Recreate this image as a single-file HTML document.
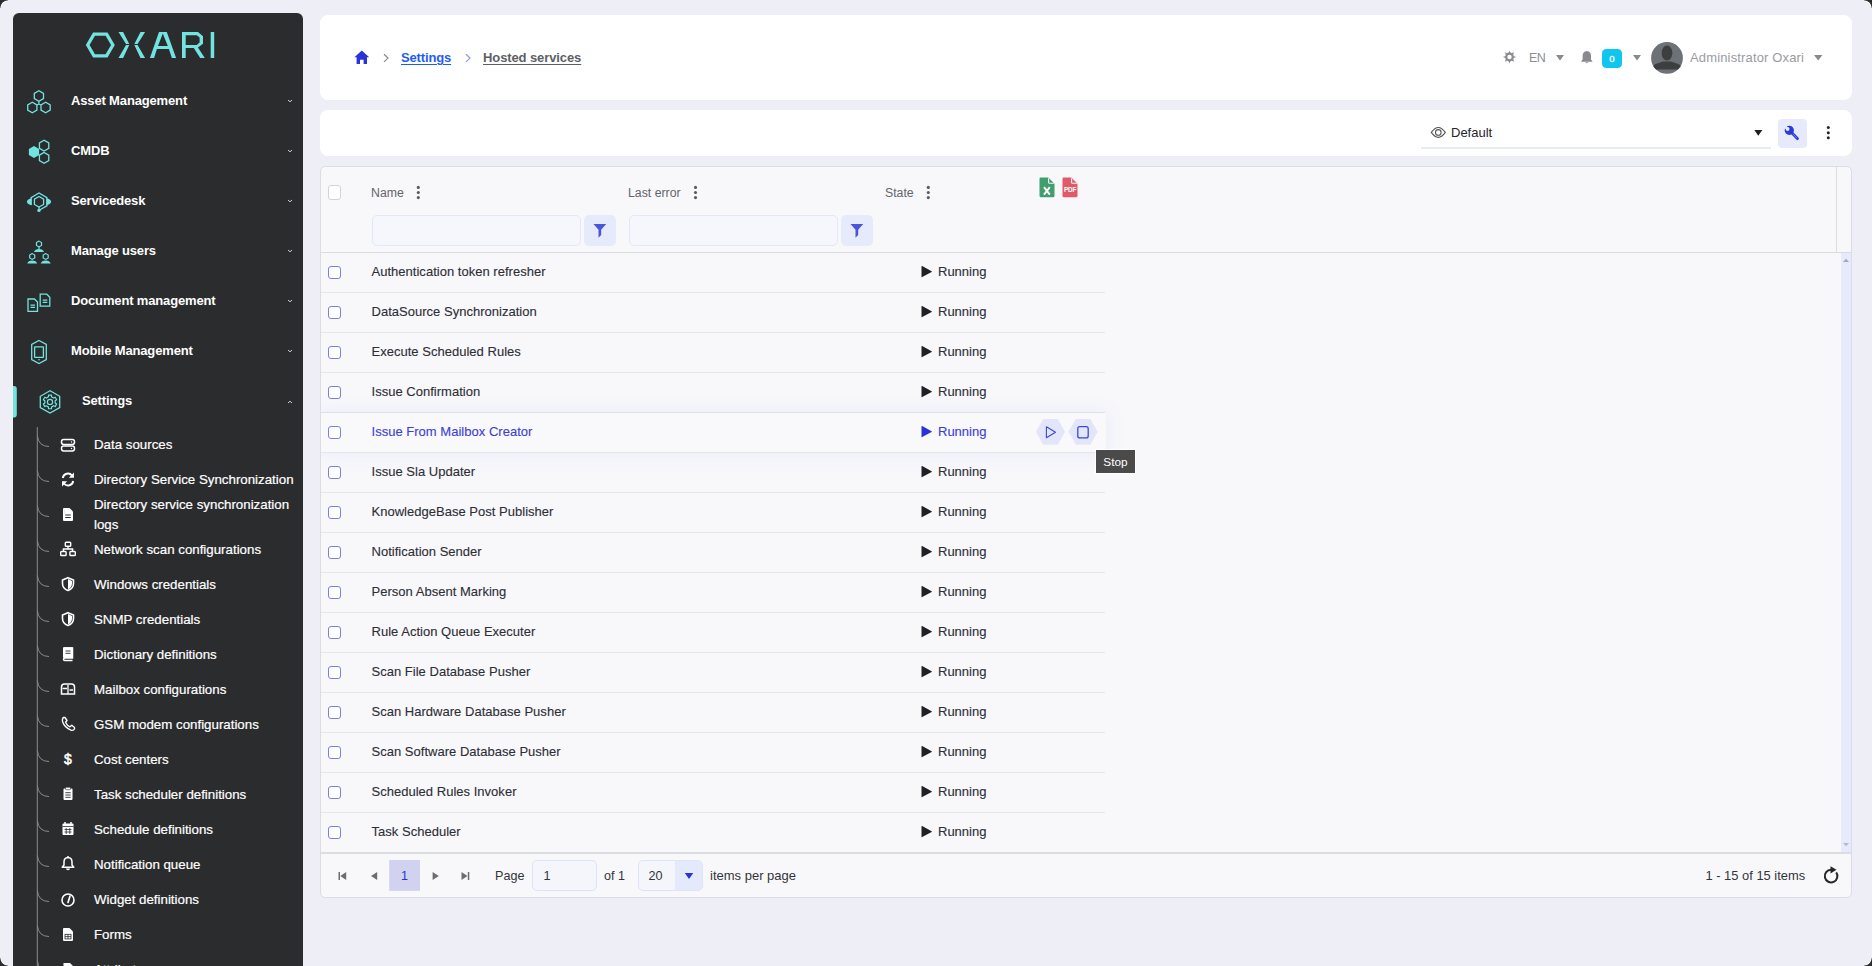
<!DOCTYPE html>
<html><head><meta charset="utf-8">
<style>
*{box-sizing:border-box;margin:0;padding:0}
html,body{width:1872px;height:966px;overflow:hidden;background:#eeeef6;font-family:"Liberation Sans",sans-serif;position:relative}
.a{position:absolute}
#sb{position:absolute;left:13px;top:13px;width:290px;height:990px;background:#2b2c2e;border-radius:6px}
.mi{position:absolute;left:71px;color:#fff;font-weight:bold;font-size:13px;letter-spacing:-0.15px;line-height:20px;white-space:nowrap}
.si{position:absolute;left:94px;color:#fff;font-size:13.3px;-webkit-text-stroke:0.2px #fff;line-height:20px;white-space:nowrap}
.card{position:absolute;background:#fff;border-radius:8px}
.tx{position:absolute;white-space:nowrap;line-height:20px}
.rl{position:absolute;left:321px;width:784px;height:1px;background:#e4e5ea}
.cb{position:absolute;left:328px;width:13px;height:13px;border:1.2px solid #7a7fe6;border-radius:3px;background:#fff}
.nm{position:absolute;left:371.5px;font-size:13px;letter-spacing:0.02px;-webkit-text-stroke:0.12px currentColor;color:#2b2b33;line-height:20px;white-space:nowrap}
.st{position:absolute;left:938px;font-size:13px;-webkit-text-stroke:0.12px currentColor;color:#2b2b33;line-height:20px;white-space:nowrap}
.play{position:absolute;left:921px;width:0;height:0;border-left:10px solid #1e1f24;border-top:6px solid transparent;border-bottom:6px solid transparent}
.corner{position:absolute;width:8px;height:8px}
</style></head><body>
<div class="corner" style="left:0;top:0;background:radial-gradient(circle at 100% 100%,transparent 6.6px,#fff 7.1px,#2b2c2e 8px)"></div>
<div class="corner" style="right:0;top:0;background:radial-gradient(circle at 0 100%,transparent 6.6px,#fff 7.1px,#2b2c2e 8px)"></div>
<div class="corner" style="left:0;bottom:0;background:radial-gradient(circle at 100% 0,transparent 6.6px,#fff 7.1px,#2b2c2e 8px)"></div>
<div class="corner" style="right:0;bottom:0;background:radial-gradient(circle at 0 0,transparent 6.6px,#fff 7.1px,#2b2c2e 8px)"></div>
<div id="sb"></div>
<svg class="a" style="left:0;top:0" width="320" height="966" viewBox="0 0 320 966"><polygon points="112.90,45.00 106.60,34.09 94.00,34.09 87.70,45.00 94.00,55.91 106.60,55.91" fill="none" stroke="#72e3df" stroke-width="3.3"/>
<polygon points="118.5,32 123.1,32 129.5,44.5 123.1,58 118.5,58 126.3,44.5" fill="#72e3df"/>
<polygon points="145.1,32 140.5,32 134.1,44.5 140.5,58 145.1,58 137.3,44.5" fill="#72e3df"/>
<rect x="124" y="44" width="16" height="1" fill="#2b2c2e"/>
<path d="M149.9,58 L159,32 L166.8,32 L176.1,58 L171.9,58 L168.9,49.1 L156.9,49.1 L154.1,58 Z M158,46 L162.8,33.6 L167.8,46 Z" fill="#72e3df" fill-rule="evenodd"/>
<path d="M182,32 L198,32 L203,36.3 L203,43.8 L198,47.5 L204.8,58 L200.2,58 L193.8,48.1 L185.7,48.1 L185.7,58 L182,58 Z M185.7,35.2 L196.8,35.2 L199.6,37.6 L199.6,42.6 L196.8,44.9 L185.7,44.9 Z" fill="#72e3df" fill-rule="evenodd"/>
<rect x="210.7" y="32" width="3.5" height="26" fill="#72e3df"/>
<polygon points="38.90,90.70 34.31,93.35 34.31,98.65 38.90,101.30 43.49,98.65 43.49,93.35" fill="none" stroke="#72e3df" stroke-width="1.3"/>
<polygon points="32.30,102.20 27.71,104.85 27.71,110.15 32.30,112.80 36.89,110.15 36.89,104.85" fill="none" stroke="#72e3df" stroke-width="1.3"/>
<polygon points="45.60,102.20 41.01,104.85 41.01,110.15 45.60,112.80 50.19,110.15 50.19,104.85" fill="none" stroke="#72e3df" stroke-width="1.3"/>
<path d="M38.9,101.3 L38.9,104 M36.9,105 L38.9,104 L40.9,105" fill="none" stroke="#72e3df" stroke-width="1.3"/>
<polygon points="34.00,146.10 28.89,149.05 28.89,154.95 34.00,157.90 39.11,154.95 39.11,149.05" fill="#72e3df"/>
<polygon points="44.10,140.20 39.42,142.90 39.42,148.30 44.10,151.00 48.78,148.30 48.78,142.90" fill="none" stroke="#72e3df" stroke-width="1.3"/>
<polygon points="44.10,152.40 39.42,155.10 39.42,160.50 44.10,163.20 48.78,160.50 48.78,155.10" fill="none" stroke="#72e3df" stroke-width="1.3"/>
<path d="M31.1,199 L31.1,197.6 L39,192.9 L46.9,197.6 L46.9,199 M46.9,204.5 L46.9,205.8 L40,209.8" fill="none" stroke="#72e3df" stroke-width="1.3"/>
<polygon points="39.00,196.50 34.41,199.15 34.41,204.45 39.00,207.10 43.59,204.45 43.59,199.15" fill="none" stroke="#72e3df" stroke-width="1.3"/>
<path d="M31.9,198.3 L31.9,205.2 Q27.2,204.8 26.9,201.8 Q27.2,198.8 31.9,198.3 Z" fill="#72e3df"/><path d="M46.1,198.3 L46.1,205.2 Q50.8,204.8 51.1,201.8 Q50.8,198.8 46.1,198.3 Z" fill="#72e3df"/>
<circle cx="39" cy="210.4" r="1.7" fill="#72e3df"/><path d="M39,206.8 L39,209" stroke="#72e3df" stroke-width="1.2"/>
<polygon points="39.00,241.10 36.49,242.55 36.49,245.45 39.00,246.90 41.51,245.45 41.51,242.55" fill="none" stroke="#72e3df" stroke-width="1.2"/>
<path d="M34,252 Q35,249 39,249 Q43,249 44,252 Z" fill="#72e3df"/>
<polygon points="32.20,253.60 29.69,255.05 29.69,257.95 32.20,259.40 34.71,257.95 34.71,255.05" fill="none" stroke="#72e3df" stroke-width="1.2"/>
<path d="M27.200000000000003,263.5 Q28.200000000000003,260.5 32.2,260.5 Q36.2,260.5 37.2,263.5 Z" fill="#72e3df"/>
<polygon points="45.70,253.60 43.19,255.05 43.19,257.95 45.70,259.40 48.21,257.95 48.21,255.05" fill="none" stroke="#72e3df" stroke-width="1.2"/>
<path d="M40.7,263.5 Q41.7,260.5 45.7,260.5 Q49.7,260.5 50.7,263.5 Z" fill="#72e3df"/>
<path d="M39,247 L39,249" stroke="#72e3df" stroke-width="1.2"/>
<path d="M28,299 L34.5,299 L37.5,302 L37.5,311.3 L28,311.3 Z" fill="none" stroke="#72e3df" stroke-width="1.3"/><path d="M30.5,305.15 L35.0,305.15 M30.5,307.364 L35.0,307.364" stroke="#72e3df" stroke-width="1.2"/>
<path d="M40.2,294.2 L46.800000000000004,294.2 L49.800000000000004,297.2 L49.800000000000004,306.2 L40.2,306.2 Z" fill="none" stroke="#72e3df" stroke-width="1.3"/><path d="M42.7,300.2 L47.300000000000004,300.2 M42.7,302.36 L47.300000000000004,302.36" stroke="#72e3df" stroke-width="1.2"/>
<polygon points="39,340.5 46.3,344.5 46.3,359.5 39,363.5 31.7,359.5 31.7,344.5" fill="none" stroke="#72e3df" stroke-width="1.3"/>
<rect x="34.6" y="346.8" width="8.8" height="10.6" rx="0.5" fill="none" stroke="#72e3df" stroke-width="1.3"/>
<circle cx="39" cy="359.8" r="0.8" fill="#72e3df"/>
<polygon points="50.00,390.70 40.30,396.30 40.30,407.50 50.00,413.10 59.70,407.50 59.70,396.30" fill="none" stroke="#72e3df" stroke-width="1.3"/>
<polygon points="51.55,396.83 51.46,395.05 48.54,395.05 48.45,396.83 47.80,397.19 47.40,397.40 47.02,397.64 46.39,398.02 44.80,397.22 43.34,399.74 44.84,400.71 44.82,401.45 44.80,401.90 44.82,402.35 44.84,403.09 43.34,404.06 44.80,406.58 46.39,405.78 47.02,406.16 47.40,406.40 47.80,406.61 48.45,406.97 48.54,408.75 51.46,408.75 51.55,406.97 52.20,406.61 52.60,406.40 52.98,406.16 53.61,405.78 55.20,406.58 56.66,404.06 55.16,403.09 55.18,402.35 55.20,401.90 55.18,401.45 55.16,400.71 56.66,399.74 55.20,397.22 53.61,398.02 52.98,397.64 52.60,397.40 52.20,397.19" fill="none" stroke="#72e3df" stroke-width="1.2" stroke-linejoin="round"/>
<circle cx="50" cy="401.9" r="2.6" fill="none" stroke="#72e3df" stroke-width="1.2"/>
<path d="M13,386 L14,386 Q16.8,386 16.8,389 L16.8,414.5 Q16.8,417.5 14,417.5 L13,417.5 Z" fill="#72e3df"/>
<path d="M288,100 L290,101.8 L292,100" fill="none" stroke="#cfd0d2" stroke-width="1"/>
<path d="M288,150 L290,151.8 L292,150" fill="none" stroke="#cfd0d2" stroke-width="1"/>
<path d="M288,200 L290,201.8 L292,200" fill="none" stroke="#cfd0d2" stroke-width="1"/>
<path d="M288,250 L290,251.8 L292,250" fill="none" stroke="#cfd0d2" stroke-width="1"/>
<path d="M288,300 L290,301.8 L292,300" fill="none" stroke="#cfd0d2" stroke-width="1"/>
<path d="M288,350 L290,351.8 L292,350" fill="none" stroke="#cfd0d2" stroke-width="1"/>
<path d="M288,403 L290,401.2 L292,403" fill="none" stroke="#cfd0d2" stroke-width="1"/>
<path d="M37.3,427 L37.3,980" stroke="#8a8b8e" stroke-width="1"/>
<path d="M37.3,435.5 Q38.5,446.5 49,446.5" fill="none" stroke="#8a8b8e" stroke-width="1"/>
<path d="M37.3,470.5 Q38.5,481.5 49,481.5" fill="none" stroke="#8a8b8e" stroke-width="1"/>
<path d="M37.3,505.5 Q38.5,516.5 49,516.5" fill="none" stroke="#8a8b8e" stroke-width="1"/>
<path d="M37.3,540.5 Q38.5,551.5 49,551.5" fill="none" stroke="#8a8b8e" stroke-width="1"/>
<path d="M37.3,575.5 Q38.5,586.5 49,586.5" fill="none" stroke="#8a8b8e" stroke-width="1"/>
<path d="M37.3,610.5 Q38.5,621.5 49,621.5" fill="none" stroke="#8a8b8e" stroke-width="1"/>
<path d="M37.3,645.5 Q38.5,656.5 49,656.5" fill="none" stroke="#8a8b8e" stroke-width="1"/>
<path d="M37.3,680.5 Q38.5,691.5 49,691.5" fill="none" stroke="#8a8b8e" stroke-width="1"/>
<path d="M37.3,715.5 Q38.5,726.5 49,726.5" fill="none" stroke="#8a8b8e" stroke-width="1"/>
<path d="M37.3,750.5 Q38.5,761.5 49,761.5" fill="none" stroke="#8a8b8e" stroke-width="1"/>
<path d="M37.3,785.5 Q38.5,796.5 49,796.5" fill="none" stroke="#8a8b8e" stroke-width="1"/>
<path d="M37.3,820.5 Q38.5,831.5 49,831.5" fill="none" stroke="#8a8b8e" stroke-width="1"/>
<path d="M37.3,855.5 Q38.5,866.5 49,866.5" fill="none" stroke="#8a8b8e" stroke-width="1"/>
<path d="M37.3,890.5 Q38.5,901.5 49,901.5" fill="none" stroke="#8a8b8e" stroke-width="1"/>
<path d="M37.3,925.5 Q38.5,936.5 49,936.5" fill="none" stroke="#8a8b8e" stroke-width="1"/>
<path d="M37.3,960.5 Q38.5,971.5 49,971.5" fill="none" stroke="#8a8b8e" stroke-width="1"/>
<rect x="61.5" y="439.5" width="13" height="5" rx="2.2" fill="none" stroke="#ffffff" stroke-width="1.5"/><rect x="61.5" y="446" width="13" height="5" rx="2.2" fill="none" stroke="#ffffff" stroke-width="1.5"/><circle cx="71.5" cy="442" r="0.7" fill="#ffffff"/><circle cx="71.5" cy="448.5" r="0.7" fill="#ffffff"/>
<path d="M62.8,478 A5.2,5.2 0 0 1 72,475.5 M73.2,481 A5.2,5.2 0 0 1 64,483.5" fill="none" stroke="#ffffff" stroke-width="1.9"/><polygon points="74,472.5 74,477.8 68.8,477.8" fill="#ffffff"/><polygon points="62,486.5 62,481.2 67.2,481.2" fill="#ffffff"/>
<path d="M64,508 L69.5,508 L73,511.5 L73,520 Q73,521 72,521 L64,521 Q63,521 63,520 L63,509 Q63,508 64,508 Z" fill="#ffffff"/><path d="M65.2,515 L70.8,515 M65.2,517.5 L70.8,517.5" stroke="#2b2c2e" stroke-width="1"/><path d="M64.5,509.5 L64.5,514" stroke="#2b2c2e" stroke-width="0.1"/>
<rect x="65.3" y="542.2" width="5.4" height="4" rx="0.8" fill="none" stroke="#ffffff" stroke-width="1.4"/><rect x="60.7" y="551.5" width="5.4" height="4" rx="0.8" fill="none" stroke="#ffffff" stroke-width="1.4"/><rect x="69.9" y="551.5" width="5.4" height="4" rx="0.8" fill="none" stroke="#ffffff" stroke-width="1.4"/><path d="M68,546.5 L68,549 M63.4,551 L63.4,549 L72.6,549 L72.6,551" fill="none" stroke="#ffffff" stroke-width="1.4"/>
<path d="M68,577.7 L73.5,580 L73.5,583.5 Q73.5,588.5 68,590.5 Q62.5,588.5 62.5,583.5 L62.5,580 Z" fill="none" stroke="#ffffff" stroke-width="1.6"/><path d="M68,579 L68,589.5 Q71.8,587.5 72,583.5 L72,581 Z" fill="#ffffff"/>
<path d="M68,612.7 L73.5,615 L73.5,618.5 Q73.5,623.5 68,625.5 Q62.5,623.5 62.5,618.5 L62.5,615 Z" fill="none" stroke="#ffffff" stroke-width="1.6"/><path d="M68,614 L68,624.5 Q71.8,622.5 72,618.5 L72,616 Z" fill="#ffffff"/>
<path d="M63.5,648 L72.5,648 L72.5,658 L64.8,658 Q63.5,658 63.5,659.3 Q63.5,660.5 64.8,660.5 L72.5,660.5" fill="none" stroke="#ffffff" stroke-width="1.5"/><rect x="63" y="647.3" width="10" height="10.8" rx="1" fill="#ffffff"/><path d="M65.5,651 L70.5,651 M65.5,653.3 L70.5,653.3" stroke="#2b2c2e" stroke-width="0.9"/>
<path d="M64.5,684 L71.5,684 Q74.5,684 74.5,687 L74.5,694 L61.5,694 L61.5,687 Q61.5,684 64.5,684 Z" fill="none" stroke="#ffffff" stroke-width="1.5"/><path d="M68,685 L68,694 M62.5,688.5 L67,688.5 M69.5,690 L73,690" stroke="#ffffff" stroke-width="1.3"/>
<path d="M63.3,717.5 Q62,719 62.5,721.5 Q64.5,727.5 71,730.2 Q73.5,730.8 74.5,729 L74.5,727.5 L71.8,725.3 L70,726.8 Q67,725.5 65.5,722.2 L67,720.5 L65,717.5 Z" fill="none" stroke="#ffffff" stroke-width="1.4" stroke-linejoin="round"/>
<text x="68" y="764.3" text-anchor="middle" font-family="Liberation Sans" font-size="14" fill="#ffffff" stroke="#ffffff" stroke-width="0.5">$</text>
<rect x="63.5" y="788.5" width="9" height="11.5" rx="1" fill="#ffffff"/><rect x="65.5" y="787.2" width="5" height="2.5" rx="0.8" fill="#ffffff" stroke="#2b2c2e" stroke-width="0.6"/><path d="M65.3,792.7 L70.7,792.7 M65.3,795 L70.7,795 M65.3,797.3 L70.7,797.3" stroke="#2b2c2e" stroke-width="0.9"/>
<rect x="62.5" y="823.5" width="11" height="11.5" rx="1" fill="#ffffff"/><path d="M65,822 L65,824.5 M71,822 L71,824.5" stroke="#ffffff" stroke-width="1.5"/><path d="M62.5,826.5 L73.5,826.5" stroke="#2b2c2e" stroke-width="0.8"/><path d="M64.5,829.5 L71.5,829.5 M64.5,832 L71.5,832 M66.2,828 L66.2,834 M69.8,828 L69.8,834" stroke="#2b2c2e" stroke-width="0.8"/>
<path d="M68,857.5 Q72,857.8 72,862 L72,865 L73.8,867.2 L62.2,867.2 L64,865 L64,862 Q64,857.8 68,857.5 Z" fill="none" stroke="#ffffff" stroke-width="1.5" stroke-linejoin="round"/><path d="M66.5,869 Q68,870.8 69.5,869 Z" fill="#ffffff" stroke="#ffffff" stroke-width="1"/><path d="M68,856 L68,857.5" stroke="#ffffff" stroke-width="1.4"/>
<circle cx="68" cy="900" r="6" fill="none" stroke="#ffffff" stroke-width="1.6"/><path d="M68,902.5 L70,896" stroke="#ffffff" stroke-width="1.7" stroke-linecap="round"/>
<path d="M64,928 L69.5,928 L73,931.5 L73,940 Q73,941 72,941 L64,941 Q63,941 63,940 L63,929 Q63,928 64,928 Z" fill="#ffffff"/><rect x="65" y="934.3" width="6" height="4.6" fill="none" stroke="#2b2c2e" stroke-width="0.8"/><path d="M65,936.6 L71,936.6 M68,934.3 L68,938.9" stroke="#2b2c2e" stroke-width="0.8"/>
<path d="M63.5,963 L70,963 L73,966 L73,975 L63.5,975 Z" fill="#ffffff"/></svg>
<div class="mi" style="top:91px">Asset Management</div>
<div class="mi" style="top:141px">CMDB</div>
<div class="mi" style="top:191px">Servicedesk</div>
<div class="mi" style="top:241px">Manage users</div>
<div class="mi" style="top:291px">Document management</div>
<div class="mi" style="top:341px">Mobile Management</div>
<div class="mi" style="top:391px;left:82px">Settings</div>
<div class="si" style="top:435px">Data sources</div>
<div class="si" style="top:470px">Directory Service Synchronization</div>
<div class="si" style="top:495px">Directory service synchronization<br>logs</div>
<div class="si" style="top:540px">Network scan configurations</div>
<div class="si" style="top:575px">Windows credentials</div>
<div class="si" style="top:610px">SNMP credentials</div>
<div class="si" style="top:645px">Dictionary definitions</div>
<div class="si" style="top:680px">Mailbox configurations</div>
<div class="si" style="top:715px">GSM modem configurations</div>
<div class="si" style="top:750px">Cost centers</div>
<div class="si" style="top:785px">Task scheduler definitions</div>
<div class="si" style="top:820px">Schedule definitions</div>
<div class="si" style="top:855px">Notification queue</div>
<div class="si" style="top:890px">Widget definitions</div>
<div class="si" style="top:925px">Forms</div>
<div class="si" style="top:960px">Attributes</div>
<!-- header card -->
<div class="card" style="left:320px;top:15px;width:1532px;height:85px"></div>
<div class="card" style="left:320px;top:110px;width:1532px;height:46px"></div>
<svg class="a" style="left:0;top:0" width="1872" height="160" viewBox="0 0 1872 160">
<!-- home -->
<path d="M361.8,50.5 L369.2,57.3 L367,57.3 L367,64 L363.6,64 L363.6,59.8 L360,59.8 L360,64 L356.6,64 L356.6,57.3 L354.4,57.3 Z" fill="#2a33d6"/>
<path d="M384,54.3 L388,58.1 L384,61.9" fill="none" stroke="#8a8a8e" stroke-width="1.2"/>
<path d="M466,54.3 L470,58.1 L466,61.9" fill="none" stroke="#9393e3" stroke-width="1.2"/>
<!-- gear -->
<g transform="translate(1509.5,57)" fill="#8a8a8e"><polygon points="-1.09,-4.06 0.00,-6.60 1.09,-4.06"/><polygon points="2.10,-3.64 4.67,-4.67 3.64,-2.10"/><polygon points="4.06,-1.09 6.60,-0.00 4.06,1.09"/><polygon points="3.64,2.10 4.67,4.67 2.10,3.64"/><polygon points="1.09,4.06 0.00,6.60 -1.09,4.06"/><polygon points="-2.10,3.64 -4.67,4.67 -3.64,2.10"/><polygon points="-4.06,1.09 -6.60,0.00 -4.06,-1.09"/><polygon points="-3.64,-2.10 -4.67,-4.67 -2.10,-3.64"/><circle r="3.3" fill="none" stroke="#8a8a8e" stroke-width="2.2"/></g>
<polygon points="1556,55 1564,55 1560,60.6" fill="#8a8a8e"/>
<!-- bell -->
<path d="M1586.8,51 Q1591,51.5 1591,56 L1591,59.5 L1592.6,61.8 L1581,61.8 L1582.6,59.5 L1582.6,56 Q1582.6,51.5 1586.8,51 Z" fill="#8a8a8e"/>
<path d="M1585.2,62.3 Q1586.8,64.2 1588.4,62.3 Z" fill="#8a8a8e"/>
<rect x="1602" y="49" width="20" height="19" rx="4.3" fill="#0fc6ef"/>
<text x="1611.9" y="61.7" text-anchor="middle" font-family="Liberation Sans" font-size="9.6" fill="#fff" stroke="#fff" stroke-width="0.35">0</text>
<polygon points="1633,55 1641,55 1637,60.6" fill="#8a8a8e"/>
<!-- avatar -->
<defs><clipPath id="av"><circle cx="1667" cy="57.9" r="15.9"/></clipPath></defs>
<circle cx="1667" cy="57.9" r="15.9" fill="#6d7178"/>
<g clip-path="url(#av)">
<ellipse cx="1667" cy="53" rx="5.4" ry="7.4" fill="#3d3e40"/>
<path d="M1652,69.5 L1653,66.5 Q1654,64 1658,63.2 L1663,61.5 L1671,61.5 L1676,63.2 Q1680,64 1681,66.5 L1682,69.5 Z" fill="#3d3e40"/>
</g>
<polygon points="1814,55 1822.4,55 1818.2,60.6" fill="#8a8a8e"/>
<!-- toolbar -->
<g fill="none" stroke="#55565c" stroke-width="1.1">
<path d="M1431.3,132.4 Q1438.3,122.5 1445.3,132.4 Q1438.3,142.3 1431.3,132.4 Z"/>
<circle cx="1438.3" cy="132.4" r="2.8"/>
</g>
<polygon points="1754.3,130 1762.3,130 1758.3,135.8" fill="#1f2024"/>
<rect x="1421" y="147.5" width="350" height="1" fill="#d6d7df"/>
<rect x="1778" y="119" width="29" height="29" rx="4" fill="#e7eafc"/>
<line x1="1791.5" y1="132.5" x2="1797.4" y2="138.6" stroke="#2c3ad8" stroke-width="2.9" stroke-linecap="round"/><line x1="1792.6" y1="133.6" x2="1797" y2="138.2" stroke="#9aa2ee" stroke-width="0.6"/><circle cx="1789.3" cy="130.3" r="4.6" fill="#2c3ad8"/><circle cx="1787.6" cy="129" r="1.9" fill="#e7eafc"/><line x1="1787.6" y1="129" x2="1784.6" y2="126" stroke="#e7eafc" stroke-width="2.6"/>
<circle cx="1828.3" cy="127.6" r="1.5" fill="#222"/><circle cx="1828.3" cy="132.7" r="1.5" fill="#222"/><circle cx="1828.3" cy="137.8" r="1.5" fill="#222"/>
</svg>
<div class="tx" style="left:401px;top:48px;font-size:13px;font-weight:bold;color:#1e5cf5;letter-spacing:-0.15px;text-decoration:underline;text-underline-offset:2px">Settings</div>
<div class="tx" style="left:483px;top:48px;font-size:13px;font-weight:bold;color:#5d5f67;letter-spacing:-0.1px;text-decoration:underline;text-underline-offset:2px">Hosted services</div>
<div class="tx" style="left:1529px;top:48px;font-size:12.5px;color:#8e8e96;letter-spacing:-0.6px">EN</div>
<div class="tx" style="left:1690px;top:48px;font-size:13px;color:#9a9aa2;letter-spacing:0.15px">Administrator Oxari</div>
<div class="tx" style="left:1451px;top:123px;font-size:13px;color:#25262b">Default</div>
<div class="a" style="left:320px;top:166px;width:1532px;height:732px;background:#f8f8fb;border:1px solid #dcdde4;border-radius:5px"></div>
<div class="a" style="left:321px;top:252px;width:1530px;height:1px;background:#d9dbe1"></div>
<div class="a" style="left:1836px;top:167px;width:1px;height:85px;background:#dcdde4"></div>
<div class="a" style="left:1841px;top:253px;width:10px;height:600px;background:#e6eafc"></div>
<svg class="a" style="left:1841px;top:253px" width="10" height="600"><polygon points="2,9 5,5.8 8,9" fill="#a4a6ad"/><polygon points="2,590 5,593.2 8,590" fill="#b8bac0"/></svg>
<div class="a" style="left:321px;top:852px;width:1530px;height:2px;background:#dcdde3"></div>
<div class="a" style="left:328px;top:185px;width:13px;height:15px;border:1px solid #d3d4da;border-radius:3px;background:#fff"></div>
<div class="tx" style="left:371px;top:183px;font-size:12.3px;color:#64656b">Name</div>
<div class="tx" style="left:628px;top:183px;font-size:12.3px;color:#64656b">Last error</div>
<div class="tx" style="left:885px;top:183px;font-size:12.3px;color:#64656b">State</div>
<div class="a" style="left:372px;top:215px;width:209px;height:31px;border:1px solid #e2e7fb;border-radius:5px;background:#f6f7fc"></div>
<div class="a" style="left:584px;top:215px;width:32px;height:31px;border-radius:5px;background:#e6ebfc"></div>
<div class="a" style="left:629px;top:215px;width:209px;height:31px;border:1px solid #e2e7fb;border-radius:5px;background:#f6f7fc"></div>
<div class="a" style="left:841px;top:215px;width:32px;height:31px;border-radius:5px;background:#e6ebfc"></div>
<div class="rl" style="top:292px"></div>
<div class="cb" style="top:266px"></div>
<div class="nm" style="top:262px;color:#2e2f36">Authentication token refresher</div>
<div class="st" style="top:262px;color:#2e2f36">Running</div>
<div class="rl" style="top:332px"></div>
<div class="cb" style="top:306px"></div>
<div class="nm" style="top:302px;color:#2e2f36">DataSource Synchronization</div>
<div class="st" style="top:302px;color:#2e2f36">Running</div>
<div class="rl" style="top:372px"></div>
<div class="cb" style="top:346px"></div>
<div class="nm" style="top:342px;color:#2e2f36">Execute Scheduled Rules</div>
<div class="st" style="top:342px;color:#2e2f36">Running</div>
<div class="rl" style="top:412px"></div>
<div class="cb" style="top:386px"></div>
<div class="nm" style="top:382px;color:#2e2f36">Issue Confirmation</div>
<div class="st" style="top:382px;color:#2e2f36">Running</div>
<div class="a" style="left:321px;top:253px;width:1520px;height:599px;overflow:hidden"><div class="a" style="left:0;top:160.0px;width:785px;height:40px;background:#f9f9fc;box-shadow:0 0 18px 3px rgba(90,100,230,0.075)"></div></div>
<div class="rl" style="top:452px"></div>
<div class="cb" style="top:426px"></div>
<div class="nm" style="top:422px;color:#3b3fd6">Issue From Mailbox Creator</div>
<div class="st" style="top:422px;color:#3b3fd6">Running</div>
<div class="rl" style="top:492px"></div>
<div class="cb" style="top:466px"></div>
<div class="nm" style="top:462px;color:#2e2f36">Issue Sla Updater</div>
<div class="st" style="top:462px;color:#2e2f36">Running</div>
<div class="rl" style="top:532px"></div>
<div class="cb" style="top:506px"></div>
<div class="nm" style="top:502px;color:#2e2f36">KnowledgeBase Post Publisher</div>
<div class="st" style="top:502px;color:#2e2f36">Running</div>
<div class="rl" style="top:572px"></div>
<div class="cb" style="top:546px"></div>
<div class="nm" style="top:542px;color:#2e2f36">Notification Sender</div>
<div class="st" style="top:542px;color:#2e2f36">Running</div>
<div class="rl" style="top:612px"></div>
<div class="cb" style="top:586px"></div>
<div class="nm" style="top:582px;color:#2e2f36">Person Absent Marking</div>
<div class="st" style="top:582px;color:#2e2f36">Running</div>
<div class="rl" style="top:652px"></div>
<div class="cb" style="top:626px"></div>
<div class="nm" style="top:622px;color:#2e2f36">Rule Action Queue Executer</div>
<div class="st" style="top:622px;color:#2e2f36">Running</div>
<div class="rl" style="top:692px"></div>
<div class="cb" style="top:666px"></div>
<div class="nm" style="top:662px;color:#2e2f36">Scan File Database Pusher</div>
<div class="st" style="top:662px;color:#2e2f36">Running</div>
<div class="rl" style="top:732px"></div>
<div class="cb" style="top:706px"></div>
<div class="nm" style="top:702px;color:#2e2f36">Scan Hardware Database Pusher</div>
<div class="st" style="top:702px;color:#2e2f36">Running</div>
<div class="rl" style="top:772px"></div>
<div class="cb" style="top:746px"></div>
<div class="nm" style="top:742px;color:#2e2f36">Scan Software Database Pusher</div>
<div class="st" style="top:742px;color:#2e2f36">Running</div>
<div class="rl" style="top:812px"></div>
<div class="cb" style="top:786px"></div>
<div class="nm" style="top:782px;color:#2e2f36">Scheduled Rules Invoker</div>
<div class="st" style="top:782px;color:#2e2f36">Running</div>
<div class="cb" style="top:826px"></div>
<div class="nm" style="top:822px;color:#2e2f36">Task Scheduler</div>
<div class="st" style="top:822px;color:#2e2f36">Running</div>
<svg class="a" style="left:0;top:0" width="1872" height="900" viewBox="0 0 1872 900"><circle cx="418.3" cy="187.4" r="1.55" fill="#5a5b60"/><circle cx="418.3" cy="192.5" r="1.55" fill="#5a5b60"/><circle cx="418.3" cy="197.6" r="1.55" fill="#5a5b60"/><circle cx="695.5" cy="187.4" r="1.55" fill="#5a5b60"/><circle cx="695.5" cy="192.5" r="1.55" fill="#5a5b60"/><circle cx="695.5" cy="197.6" r="1.55" fill="#5a5b60"/><circle cx="928.3" cy="187.4" r="1.55" fill="#5a5b60"/><circle cx="928.3" cy="192.5" r="1.55" fill="#5a5b60"/><circle cx="928.3" cy="197.6" r="1.55" fill="#5a5b60"/><path d="M593.5,223.9 L606.2,223.9 L601.2,229.7 L601.2,235 L598.5,237.8 L598.5,229.7 Z" fill="#4a55d8"/><path d="M850.5,223.9 L863.2,223.9 L858.2,229.7 L858.2,235 L855.5,237.8 L855.5,229.7 Z" fill="#4a55d8"/><path d="M1040.5,177.6 L1048.3,177.6 L1054.5,183.8 L1054.5,195.7 Q1054.5,197.2 1053,197.2 L1041,197.2 Q1039.5,197.2 1039.5,195.7 L1039.5,178.9 Q1039.5,177.6 1040.5,177.6 Z" fill="#419e6d"/><path d="M1048.6,178.2 L1048.6,182.2 Q1048.6,183.3 1049.7,183.3 L1053.9,183.3" fill="none" stroke="#f8f8fb" stroke-width="1.1"/><path d="M1044,187.2 L1049.8,194.6 M1049.8,187.2 L1044,194.6" stroke="#fff" stroke-width="1.9"/><path d="M1063.6,177.6 L1071.3,177.6 L1077.5,183.8 L1077.5,195.7 Q1077.5,197.2 1076,197.2 L1064,197.2 Q1062.5,197.2 1062.5,195.7 L1062.5,178.9 Q1062.5,177.6 1063.6,177.6 Z" fill="#e15a6a"/><path d="M1071.6,178.2 L1071.6,182.2 Q1071.6,183.3 1072.7,183.3 L1076.9,183.3" fill="none" stroke="#f8f8fb" stroke-width="1.1"/><text x="1070.1" y="192.3" text-anchor="middle" font-family="Liberation Sans" font-weight="bold" font-size="7.6" fill="#fff" letter-spacing="-0.35" transform="translate(1070.1 0) scale(0.85 1) translate(-1070.1 0)">PDF</text><path d="M922.2,266.1 L931.6,271.2 Q932.3,271.6 931.6,272.0 L922.2,277.1 Q921.5,277.5 921.5,276.7 L921.5,266.5 Q921.5,265.7 922.2,266.1 Z" fill="#1f2025"/><path d="M922.2,306.1 L931.6,311.2 Q932.3,311.6 931.6,312.0 L922.2,317.1 Q921.5,317.5 921.5,316.7 L921.5,306.5 Q921.5,305.7 922.2,306.1 Z" fill="#1f2025"/><path d="M922.2,346.1 L931.6,351.2 Q932.3,351.6 931.6,352.0 L922.2,357.1 Q921.5,357.5 921.5,356.7 L921.5,346.5 Q921.5,345.7 922.2,346.1 Z" fill="#1f2025"/><path d="M922.2,386.1 L931.6,391.2 Q932.3,391.6 931.6,392.0 L922.2,397.1 Q921.5,397.5 921.5,396.7 L921.5,386.5 Q921.5,385.7 922.2,386.1 Z" fill="#1f2025"/><path d="M922.2,426.1 L931.6,431.2 Q932.3,431.6 931.6,432.0 L922.2,437.1 Q921.5,437.5 921.5,436.7 L921.5,426.5 Q921.5,425.7 922.2,426.1 Z" fill="#2a33d8"/><polygon points="1035.9,431.8 1043.2,419.0 1057.8,419.0 1065.1,431.8 1057.8,444.7 1043.2,444.7" fill="#e3e6fb"/><polygon points="1068.5,431.8 1075.8,419.0 1090.3999999999999,419.0 1097.6999999999998,431.8 1090.3999999999999,444.7 1075.8,444.7" fill="#e3e6fb"/><path d="M1046.4,426.7 L1055.5,432.2 L1046.4,437.7 Z" fill="none" stroke="#3d48da" stroke-width="1.1" stroke-linejoin="round"/><rect x="1077.8" y="426.7" width="10.4" height="11.2" rx="2" fill="none" stroke="#3d48da" stroke-width="1.3"/><path d="M922.2,466.1 L931.6,471.2 Q932.3,471.6 931.6,472.0 L922.2,477.1 Q921.5,477.5 921.5,476.7 L921.5,466.5 Q921.5,465.7 922.2,466.1 Z" fill="#1f2025"/><path d="M922.2,506.1 L931.6,511.2 Q932.3,511.6 931.6,512.0 L922.2,517.1 Q921.5,517.5 921.5,516.7 L921.5,506.5 Q921.5,505.7 922.2,506.1 Z" fill="#1f2025"/><path d="M922.2,546.1 L931.6,551.2 Q932.3,551.6 931.6,552.0 L922.2,557.1 Q921.5,557.5 921.5,556.7 L921.5,546.5 Q921.5,545.7 922.2,546.1 Z" fill="#1f2025"/><path d="M922.2,586.1 L931.6,591.2 Q932.3,591.6 931.6,592.0 L922.2,597.1 Q921.5,597.5 921.5,596.7 L921.5,586.5 Q921.5,585.7 922.2,586.1 Z" fill="#1f2025"/><path d="M922.2,626.1 L931.6,631.2 Q932.3,631.6 931.6,632.0 L922.2,637.1 Q921.5,637.5 921.5,636.7 L921.5,626.5 Q921.5,625.7 922.2,626.1 Z" fill="#1f2025"/><path d="M922.2,666.1 L931.6,671.2 Q932.3,671.6 931.6,672.0 L922.2,677.1 Q921.5,677.5 921.5,676.7 L921.5,666.5 Q921.5,665.7 922.2,666.1 Z" fill="#1f2025"/><path d="M922.2,706.1 L931.6,711.2 Q932.3,711.6 931.6,712.0 L922.2,717.1 Q921.5,717.5 921.5,716.7 L921.5,706.5 Q921.5,705.7 922.2,706.1 Z" fill="#1f2025"/><path d="M922.2,746.1 L931.6,751.2 Q932.3,751.6 931.6,752.0 L922.2,757.1 Q921.5,757.5 921.5,756.7 L921.5,746.5 Q921.5,745.7 922.2,746.1 Z" fill="#1f2025"/><path d="M922.2,786.1 L931.6,791.2 Q932.3,791.6 931.6,792.0 L922.2,797.1 Q921.5,797.5 921.5,796.7 L921.5,786.5 Q921.5,785.7 922.2,786.1 Z" fill="#1f2025"/><path d="M922.2,826.1 L931.6,831.2 Q932.3,831.6 931.6,832.0 L922.2,837.1 Q921.5,837.5 921.5,836.7 L921.5,826.5 Q921.5,825.7 922.2,826.1 Z" fill="#1f2025"/></svg>
<div class="a" style="left:1095px;top:449px;width:41px;height:25px;border:1px solid #fff;background:#4a4a4a;color:#fff;font-size:11.8px;line-height:24px;text-align:center">Stop</div>
<svg class="a" style="left:0;top:840px" width="1872" height="60" viewBox="0 840 1872 60"><path d="M338.5,872 L340,872 L340,880 L338.5,880 Z M346.2,872 L346.2,880 L340.3,876 Z" fill="#6a6d72"/><path d="M377.2,872 L377.2,880 L371,876 Z" fill="#6a6d72"/><path d="M432.6,872 L432.6,880 L438.8,876 Z" fill="#6a6d72"/><path d="M461.5,872 L461.5,880 L467.5,876 Z M467.8,872 L469.3,872 L469.3,880 L467.8,880 Z" fill="#6a6d72"/><rect x="389.2" y="860" width="30.8" height="30.8" fill="#d0d2f0"/><polygon points="684.8,873 693.3,873 689,879.1" fill="#2a33d8"/><path d="M1836.2,872.4 A6.3,6.3 0 1 1 1831,869.8" fill="none" stroke="#26272b" stroke-width="2"/><polygon points="1830.5,866.2 1836.5,869.8 1830.5,873.4" fill="#26272b"/></svg>
<div class="tx" style="left:389px;top:866px;width:31px;text-align:center;font-size:12.5px;color:#2a33d8">1</div>
<div class="tx" style="left:495px;top:866px;font-size:12.6px;color:#33343a">Page</div>
<div class="a" style="left:532px;top:860px;width:65px;height:31px;border:1px solid #dde3f8;border-radius:5px;background:#f5f6fc"></div>
<div class="tx" style="left:543.5px;top:866px;font-size:12.6px;color:#33343a">1</div>
<div class="tx" style="left:604px;top:866px;font-size:12.6px;color:#33343a">of 1</div>
<div class="a" style="left:638px;top:860px;width:65px;height:31px;border:1px solid #dde3f8;border-radius:5px;background:#f5f6fc;overflow:hidden"><div class="a" style="left:36px;top:0;width:29px;height:31px;background:#e5e9fc"></div></div>
<svg class="a" style="left:680px;top:870px" width="20" height="12"><polygon points="4.8,3 13.3,3 9,9.1" fill="#2a33d8"/></svg>
<div class="tx" style="left:648.5px;top:866px;font-size:12.6px;color:#33343a">20</div>
<div class="tx" style="left:710px;top:866px;font-size:13px;color:#33343a">items per page</div>
<div class="tx" style="left:1705.5px;top:866px;font-size:12.9px;color:#33343a">1 - 15 of 15 items</div>
</body></html>
